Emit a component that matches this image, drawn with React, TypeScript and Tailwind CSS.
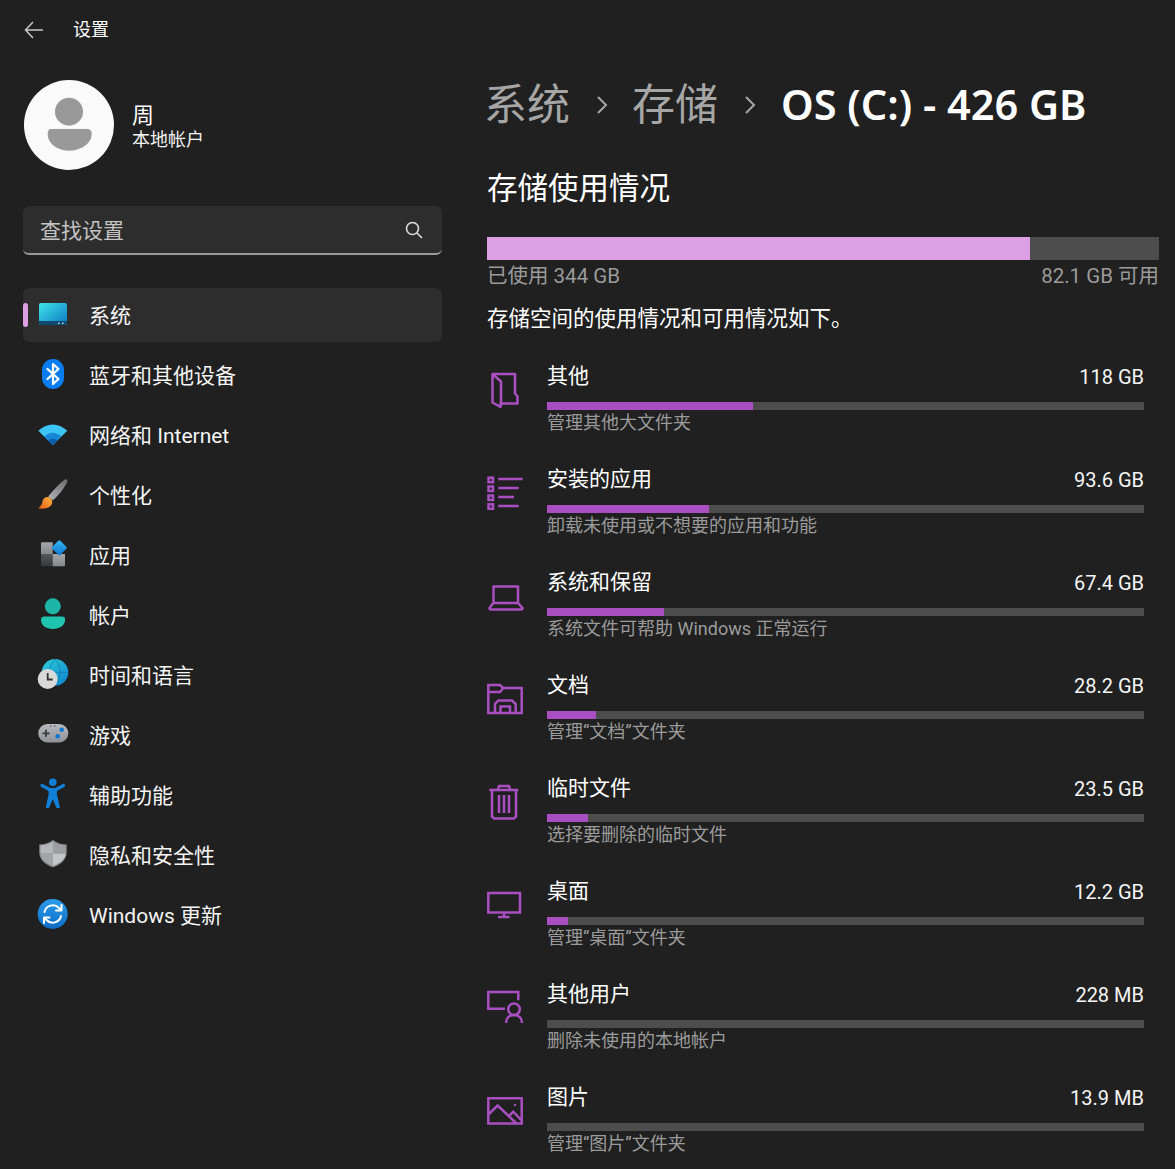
import React from 'react';

const FONT = '[font-family:Roboto,"Noto_Sans_CJK_SC",sans-serif]';

const Box = ({ children }: { children: React.ReactNode }) => (
  <svg width="36" height="36" viewBox="0 0 36 36" fill="none" className="shrink-0 overflow-visible">
    {children}
  </svg>
);

// --- colored nav icons ---
const SystemIcon = () => (
  <Box>
    <defs>
      <linearGradient id="sys" x1="0" y1="0" x2="1" y2="1">
        <stop offset="0" stopColor="#3fe3ea" />
        <stop offset="1" stopColor="#0c78c2" />
      </linearGradient>
    </defs>
    <rect x="4" y="6" width="28" height="22" rx="2" fill="url(#sys)" />
    <path d="M4 24h28v2a2 2 0 0 1-2 2H6a2 2 0 0 1-2-2z" fill="#0f4a6e" />
    <rect x="23" y="25.5" width="1.6" height="1.6" fill="#9fd8f0" />
    <rect x="27" y="25.5" width="1.6" height="1.6" fill="#9fd8f0" />
  </Box>
);

const BluetoothIcon = () => (
  <Box>
    <rect x="7" y="2" width="22" height="30" rx="11" fill="#0a7cf0" />
    <path d="M12.500 12 23.500 22 18 27V7l5.500 5L12.500 22" stroke="#fff" strokeWidth="2.200" strokeLinejoin="round" strokeLinecap="round" />
  </Box>
);

const WifiIcon = () => (
  <Box>
    <path d="M3.300 13.700Q17.700 1.500 32.300 13.700L17.700 28Z" fill="#3cc4f4" />
    <path d="M9.200 19.500Q17.700 12 26.200 19.500L17.700 28Z" fill="#1a86d8" />
    <path d="M13 23.500Q17.700 20 22.400 23.500L17.700 28Z" fill="#0f5fae" />
  </Box>
);

const BrushIcon = () => (
  <Box>
    <defs>
      <linearGradient id="brush" x1="1" y1="0" x2="0" y2="1">
        <stop offset="0" stopColor="#6a6a6c" />
        <stop offset="1" stopColor="#b4b6ba" />
      </linearGradient>
      <linearGradient id="bristle" x1="1" y1="0" x2="0" y2="1">
        <stop offset="0" stopColor="#f6b13a" />
        <stop offset="1" stopColor="#e8601c" />
      </linearGradient>
    </defs>
    <path d="M30 2.400c1.800-.6 3 .8 2.200 2.600-2.800 6.300-8.700 13.300-14.200 18.300l-4.800-3.800C17.500 14 24 7 30 2.400Z" fill="url(#brush)" />
    <path d="M12.500 20c-2.700 0-4.500 1.500-5 4.500-.4 2.700-1.800 5-4.200 6.800 4.500.8 9.500.3 12.200-2.300 2.300-2.300 2.200-5.500.5-7.300-1-1-2.200-1.700-3.500-1.700Z" fill="url(#bristle)" />
  </Box>
);

const AppsIcon = () => (
  <Box>
    <defs>
      <linearGradient id="appa" x1="0" y1="0" x2="0" y2="1">
        <stop offset="0" stopColor="#a3a6aa" />
        <stop offset="1" stopColor="#85888c" />
      </linearGradient>
      <linearGradient id="appb" x1="0" y1="0" x2="0" y2="1">
        <stop offset="0" stopColor="#56585b" />
        <stop offset="1" stopColor="#35373a" />
      </linearGradient>
      <linearGradient id="appc" x1="0" y1="0" x2="1" y2="1">
        <stop offset="0" stopColor="#37b6f5" />
        <stop offset="1" stopColor="#0f78d0" />
      </linearGradient>
    </defs>
    <path d="M7 5.300h10.700V17H6V6.300a1 1 0 0 1 1-1Z" fill="url(#appa)" />
    <path d="M6 17h11.700v12.300H7a1 1 0 0 1-1-1Z" fill="url(#appb)" />
    <path d="M17.700 17H30v11.300a1 1 0 0 1-1 1H17.700Z" fill="url(#appa)" />
    <rect x="18.600" y="5" width="11.400" height="11.400" rx="1.500" transform="rotate(45 24.300 10.700)" fill="url(#appc)" />
  </Box>
);

const AccountIcon = () => (
  <Box>
    <circle cx="17.800" cy="9.300" r="8" fill="#1cb5a8" />
    <path d="M8.500 19.500h18.600a3 3 0 0 1 3 3c0 6-5.500 9.500-12.300 9.500S6 28.500 6 22.500a3 3 0 0 1 2.500-3Z" fill="#1fc4ae" />
  </Box>
);

const TimeIcon = () => (
  <Box>
    <defs>
      <linearGradient id="globe" x1="0" y1="0" x2="1" y2="1">
        <stop offset="0" stopColor="#2fd0d8" />
        <stop offset="1" stopColor="#0e82d0" />
      </linearGradient>
    </defs>
    <circle cx="20" cy="15.300" r="13.300" fill="url(#globe)" />
    <path d="M7 15.300h26M20 2c-7 8-7 18 0 26.600M20 2c7 8 7 18 0 26.600" stroke="#0d6fae" strokeWidth="1" opacity=".6" />
    <circle cx="12.700" cy="22" r="10" fill="#d9d9d9" />
    <path d="M12.700 16v6.500h5" stroke="#333" strokeWidth="1.800" />
  </Box>
);

const GameIcon = () => (
  <Box>
    <defs>
      <linearGradient id="game" x1="0" y1="0" x2="0" y2="1">
        <stop offset="0" stopColor="#b7b9bd" />
        <stop offset="1" stopColor="#8f9297" />
      </linearGradient>
    </defs>
    <rect x="3.300" y="7" width="30" height="18.500" rx="9" fill="url(#game)" />
    <path d="M11 12.800v7M7.500 16.300h7" stroke="#3b3b3b" strokeWidth="1.800" />
    <circle cx="26.700" cy="12.700" r="2.300" fill="#0f78d4" />
    <circle cx="22.700" cy="19.300" r="2.300" fill="#0f78d4" />
    <rect x="15" y="8.500" width="1.300" height="1.300" fill="#555" />
    <rect x="19" y="8.500" width="1.300" height="1.300" fill="#555" />
  </Box>
);

const AccessIcon = () => (
  <Box>
    <circle cx="17.800" cy="5.300" r="3.800" fill="#1180d8" />
    <path d="M7 8.500 14.500 12.500H21L28.500 8.500" stroke="#1180d8" strokeWidth="3.200" strokeLinecap="round" strokeLinejoin="round" />
    <path d="M14 12.500H21.500L21 17 24 30.300H22L17.800 20 13.500 30.300H11.600L14.500 17Z" fill="#1180d8" stroke="#1180d8" strokeWidth="1.600" strokeLinejoin="round" />
  </Box>
);

const ShieldIcon = () => (
  <Box>
    <path d="M18 3C14 6 9.500 7.500 4.300 7.500v8C4.300 22.500 10 27.500 18 30.300 26 27.500 31.700 22.500 31.700 15.500v-8C26.500 7.500 22 6 18 3Z" fill="#8d8f93" />
    <path d="M18 4.500v12H5.500v-8C10.500 8.300 15 6.800 18 4.500Z" fill="#b4b6b9" />
    <path d="M18 16.500h12.500c-.4 5.500-5.500 9.800-12.500 12.300Z" fill="#c3c5c8" />
    <path d="M18 4.500v12h12.500v-8C25.500 8.300 21 6.800 18 4.500Z" fill="#9c9ea2" />
    <path d="M18 16.500H5.500c.4 5.500 5.500 9.800 12.500 12.300Z" fill="#a2a4a7" />
  </Box>
);

const UpdateIcon = () => (
  <Box>
    <defs>
      <linearGradient id="upd" x1="0" y1="0" x2="0" y2="1">
        <stop offset="0" stopColor="#2b9cec" />
        <stop offset="1" stopColor="#0c6cc4" />
      </linearGradient>
    </defs>
    <circle cx="17.700" cy="17" r="15" fill="url(#upd)" />
    <path d="M9.500 15a8.500 8.500 0 0 1 14.500-4l2 2" stroke="#fff" strokeWidth="2" fill="none" strokeLinecap="round" />
    <path d="M26.500 8v5.500H21" stroke="#fff" strokeWidth="2" fill="none" strokeLinecap="round" strokeLinejoin="round" />
    <path d="M26 19a8.500 8.500 0 0 1-14.500 4l-2-2" stroke="#fff" strokeWidth="2" fill="none" strokeLinecap="round" />
    <path d="M9 26v-5.500h5.500" stroke="#fff" strokeWidth="2" fill="none" strokeLinecap="round" strokeLinejoin="round" />
  </Box>
);

// --- purple storage icons ---
const P = ({ children }: { children: React.ReactNode }) => (
  <svg width="36" height="36" viewBox="0 0 36 36" fill="none" stroke="#a94fc1" strokeWidth="2.500" className="shrink-0 overflow-visible">
    {children}
  </svg>
);

const OtherIcon = () => (
  <P>
    <path d="M5.500 2H28V21.500L30.500 24.500V31.500H13.500V35L5.500 30.500ZM5.500 2 14 9.500V34" strokeLinejoin="round" />
  </P>
);

const AppsListIcon = () => (
  <P>
    <rect x="1.500" y="2.700" width="4.500" height="4.500" />
    <rect x="1.500" y="11.500" width="4.500" height="4.500" />
    <rect x="1.500" y="20.500" width="4.500" height="4.500" />
    <rect x="1.500" y="29.300" width="4.500" height="4.500" />
    <path d="M11.300 4H35.700M11.300 13H31.700M11.300 22H27M11.300 31H31.700" />
  </P>
);

const LaptopIcon = () => (
  <P>
    <path d="M6.500 8.500H31V25H6.500ZM6.500 25 2.500 30Q2.500 31.500 4 31.500H34Q35.500 31.500 35.500 30L31 25" strokeLinejoin="round" />
  </P>
);

const DocsIcon = () => (
  <P>
    <path d="M1.300 4H13L16.300 7H34.700V32H1.300ZM1.300 11H13L16.300 7" />
    <path d="M8 32V23L11.300 19.500H25L28.700 23V32M13.500 32.700V25.500H23V32.700" />
  </P>
);

const TrashIcon = () => (
  <P>
    <path d="M2.300 6H31.300M11 6 12 2H22L23 6M5 6V32.500L7 34.500H27L29 32.500V6M12 11V29M17 11V29M22 11V29" />
  </P>
);

const DesktopIcon = () => (
  <P>
    <path d="M1.300 6H33V25.500H1.300ZM17 25.500V30M11 30H22.500" />
  </P>
);

const UsersIcon = () => (
  <P>
    <path d="M31.300 10.300V2H1.300V18.700H18" />
    <circle cx="27" cy="19.300" r="5.800" />
    <path d="M19 33C19 28 22.500 25 27 25S35 28 35 33" />
  </P>
);

const PictureIcon = () => (
  <P>
    <path d="M1.300 5.300H34.700V30.500H1.300ZM1.300 21.500 10.700 12.500 29.500 30.500M22.500 22.500 26.300 18.700 34.700 27.500" />
    <circle cx="28" cy="12" r="1.200" fill="#a94fc1" stroke="none" />
  </P>
);

const NAV = [
  { label: '系统', icon: <SystemIcon />, active: true },
  { label: '蓝牙和其他设备', icon: <BluetoothIcon /> },
  { label: '网络和 Internet', icon: <WifiIcon /> },
  { label: '个性化', icon: <BrushIcon /> },
  { label: '应用', icon: <AppsIcon /> },
  { label: '帐户', icon: <AccountIcon /> },
  { label: '时间和语言', icon: <TimeIcon /> },
  { label: '游戏', icon: <GameIcon /> },
  { label: '辅助功能', icon: <AccessIcon /> },
  { label: '隐私和安全性', icon: <ShieldIcon /> },
  { label: 'Windows 更新', icon: <UpdateIcon /> },
];

const ROWS = [
  { title: '其他', size: '118 GB', sub: '管理其他大文件夹', fill: 206, icon: <OtherIcon /> },
  { title: '安装的应用', size: '93.6 GB', sub: '卸载未使用或不想要的应用和功能', fill: 162, icon: <AppsListIcon /> },
  { title: '系统和保留', size: '67.4 GB', sub: '系统文件可帮助 Windows 正常运行', fill: 117, icon: <LaptopIcon /> },
  { title: '文档', size: '28.2 GB', sub: '管理“文档”文件夹', fill: 49, icon: <DocsIcon /> },
  { title: '临时文件', size: '23.5 GB', sub: '选择要删除的临时文件', fill: 41, icon: <TrashIcon /> },
  { title: '桌面', size: '12.2 GB', sub: '管理“桌面”文件夹', fill: 21, icon: <DesktopIcon /> },
  { title: '其他用户', size: '228 MB', sub: '删除未使用的本地帐户', fill: 0, icon: <UsersIcon /> },
  { title: '图片', size: '13.9 MB', sub: '管理“图片”文件夹', fill: 0, icon: <PictureIcon /> },
];

const Chevron = () => (
  <svg width="12" height="20" viewBox="0 0 12 20" fill="none" stroke="#a6a6a6" strokeWidth="2" className="shrink-0">
    <path d="M2 2 10 10 2 18" />
  </svg>
);

export default function App() {
  return (
    <div className={`${FONT} flex h-[1169px] w-[1175px] overflow-hidden bg-[#202020] text-white`}>
      {/* Sidebar */}
      <aside className="flex w-[487px] shrink-0 flex-col pl-[23px] pr-[45px]">
        <div className="flex h-[60px] items-center">
          <svg width="20" height="18" viewBox="0 0 20 18" fill="none" stroke="#c8c8c8" strokeWidth="1.500" className="ml-[1px]">
            <path d="M19 9H1.500M9 1 1.500 9 9 17" />
          </svg>
          <span className="ml-[29px] text-[18px] leading-6">设置</span>
        </div>

        <div className="mt-[20px] flex items-center pl-[1px]">
          <svg width="90" height="90" viewBox="0 0 90 90" className="shrink-0">
            <circle cx="45" cy="45" r="45" fill="#fafafa" />
            <circle cx="45" cy="31.700" r="14" fill="#999" />
            <path d="M27 49H63C66.500 49 67.700 51 67.700 54 67.700 64 56 70.700 45 70.700S23.700 64 23.700 54C23.700 51 24.500 49 27 49Z" fill="#999" />
          </svg>
          <div className="ml-[18px] flex flex-col pt-[3px]">
            <span className="text-[22px] leading-[27px]">周</span>
            <span className="text-[18px] leading-[22px] text-[#f2f2f2]">本地帐户</span>
          </div>
        </div>

        <div className="mt-[36px] flex h-[49px] items-center justify-between rounded-[6px] border-b-2 border-[#9a9a9a] bg-[#2d2d2d] pl-[17px] pr-[19px]">
          <span className="pt-[5px] text-[21px] text-[#c4c4c4]">查找设置</span>
          <svg width="18" height="18" viewBox="0 0 18 18" fill="none" stroke="#dcdcdc" strokeWidth="1.600">
            <circle cx="7.500" cy="7.500" r="6" />
            <path d="M12 12 17 17" />
          </svg>
        </div>

        <nav className="mt-[33px] flex flex-col gap-[6px]">
          {NAV.map(n => (
            <div
              key={n.label}
              className={`relative flex h-[54px] items-center gap-[18px] rounded-[6px] pl-[12px] ${n.active ? 'bg-[#2d2d2d]' : ''}`}
            >
              {n.active && <div className="absolute left-0 top-[15px] h-[24px] w-[5px] rounded-full bg-[#dc9fe3]" />}
              {n.icon}
              <span className="whitespace-nowrap pt-[4px] text-[21px] text-[#f5f5f5]">{n.label}</span>
            </div>
          ))}
        </nav>
      </aside>

      {/* Main */}
      <main className="flex min-w-0 flex-1 flex-col pr-[16px]">
        <div className="mt-[72px] flex h-[66px] shrink-0 items-center">
          <span className="-ml-[3px] text-[43px] leading-none text-[#a6a6a6]">系统</span>
          <span className="ml-[26px] mr-[24px]"><Chevron /></span>
          <span className="text-[43px] leading-none text-[#a6a6a6]">存储</span>
          <span className="ml-[26px] mr-[25px]"><Chevron /></span>
          <span className="whitespace-nowrap text-[41.500px] font-semibold leading-none [font-family:'Noto_Sans']">OS (C:) - 426 GB</span>
        </div>

        <h2 className="mt-[28px] h-[46px] shrink-0 text-[30.500px] leading-[46px]">存储使用情况</h2>

        <div className="mt-[25px] flex h-[23px] shrink-0 bg-[#4d4d4d]">
          <div className="h-full bg-[#dc9fe3]" style={{ width: 543 }} />
        </div>
        <div className="mt-[2px] flex h-[28px] shrink-0 items-center justify-between text-[20.500px] text-[#9b9b9b]">
          <span>已使用 344 GB</span>
          <span>82.1 GB 可用</span>
        </div>
        <p className="mt-[15px] h-[28px] shrink-0 text-[21.500px] leading-[28px]">存储空间的使用情况和可用情况如下。</p>

        <div className="mt-[29px] flex shrink-0 flex-col pr-[15px]">
          {ROWS.map(r => (
            <div key={r.title} className="flex h-[103px] shrink-0 items-start">
              <div className="flex w-[60px] shrink-0 pt-[10px]">{r.icon}</div>
              <div className="flex min-w-0 flex-1 flex-col">
                <div className="flex h-[30px] items-center justify-between">
                  <span className="text-[21px]">{r.title}</span>
                  <span className="text-[20px] text-[#f5f5f5]">{r.size}</span>
                </div>
                <div className="mt-[10px] h-[8px] bg-[#4d4d4d]">
                  <div className="h-full bg-[#a94fc1]" style={{ width: r.fill }} />
                </div>
                <span className="mt-[1px] text-[18px] leading-[24px] text-[#9b9b9b]">{r.sub}</span>
              </div>
            </div>
          ))}
        </div>
      </main>
    </div>
  );
}
